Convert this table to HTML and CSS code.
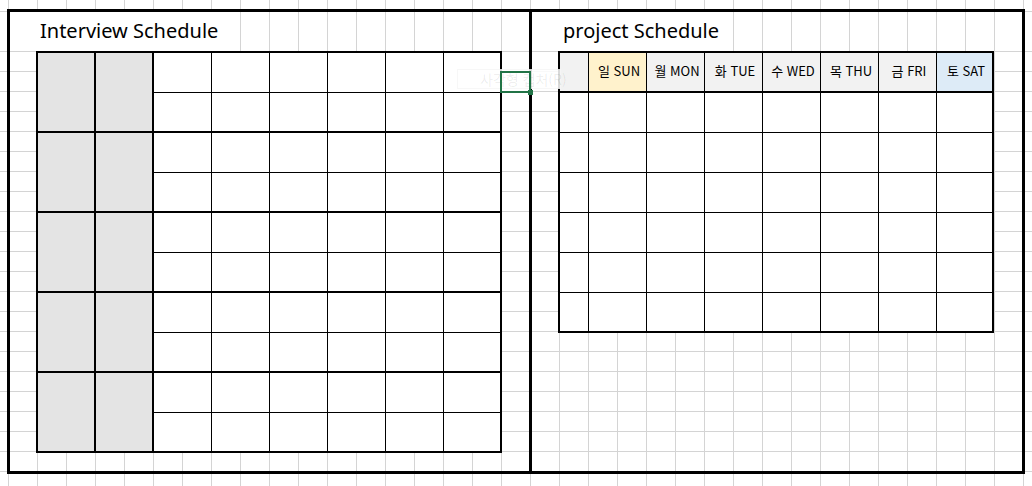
FILE: index.html
```html
<!DOCTYPE html>
<html lang="ko">
<head>
<meta charset="utf-8">
<title>Schedule</title>
<link rel="stylesheet" href="styles.css">
</head>
<body>
<div class="sheet">
  <section class="panel panel-left">
    <div class="title title-left">Interview Schedule</div>
    <div class="itable">
      <div class="ic g"></div><div class="ic g"></div>
      <div class="ic"></div><div class="ic"></div><div class="ic"></div><div class="ic"></div><div class="ic"></div><div class="ic r"></div>
      <div class="ic e"></div><div class="ic e"></div><div class="ic e"></div><div class="ic e"></div><div class="ic e"></div><div class="ic e r"></div>

      <div class="ic g"></div><div class="ic g"></div>
      <div class="ic"></div><div class="ic"></div><div class="ic"></div><div class="ic"></div><div class="ic"></div><div class="ic r"></div>
      <div class="ic e"></div><div class="ic e"></div><div class="ic e"></div><div class="ic e"></div><div class="ic e"></div><div class="ic e r"></div>

      <div class="ic g"></div><div class="ic g"></div>
      <div class="ic"></div><div class="ic"></div><div class="ic"></div><div class="ic"></div><div class="ic"></div><div class="ic r"></div>
      <div class="ic e"></div><div class="ic e"></div><div class="ic e"></div><div class="ic e"></div><div class="ic e"></div><div class="ic e r"></div>

      <div class="ic g"></div><div class="ic g"></div>
      <div class="ic"></div><div class="ic"></div><div class="ic"></div><div class="ic"></div><div class="ic"></div><div class="ic r"></div>
      <div class="ic e"></div><div class="ic e"></div><div class="ic e"></div><div class="ic e"></div><div class="ic e"></div><div class="ic e r"></div>

      <div class="ic g"></div><div class="ic g"></div>
      <div class="ic"></div><div class="ic"></div><div class="ic"></div><div class="ic"></div><div class="ic"></div><div class="ic r"></div>
      <div class="ic e"></div><div class="ic e"></div><div class="ic e"></div><div class="ic e"></div><div class="ic e"></div><div class="ic e r"></div>
    </div>
  </section>
  <section class="panel panel-right">
    <div class="title title-right">project Schedule</div>
    <div class="ptable">
      <div class="pc ph"></div>
      <div class="pc ph sun">일 SUN</div>
      <div class="pc ph">월 MON</div>
      <div class="pc ph">화 TUE</div>
      <div class="pc ph">수 WED</div>
      <div class="pc ph">목 THU</div>
      <div class="pc ph">금 FRI</div>
      <div class="pc ph sat r">토 SAT</div>

      <div class="pc"></div><div class="pc"></div><div class="pc"></div><div class="pc"></div><div class="pc"></div><div class="pc"></div><div class="pc"></div><div class="pc r"></div>
      <div class="pc"></div><div class="pc"></div><div class="pc"></div><div class="pc"></div><div class="pc"></div><div class="pc"></div><div class="pc"></div><div class="pc r"></div>
      <div class="pc"></div><div class="pc"></div><div class="pc"></div><div class="pc"></div><div class="pc"></div><div class="pc"></div><div class="pc"></div><div class="pc r"></div>
      <div class="pc"></div><div class="pc"></div><div class="pc"></div><div class="pc"></div><div class="pc"></div><div class="pc"></div><div class="pc"></div><div class="pc r"></div>
      <div class="pc"></div><div class="pc"></div><div class="pc"></div><div class="pc"></div><div class="pc"></div><div class="pc"></div><div class="pc"></div><div class="pc r"></div>
      <div class="pc l"></div><div class="pc l"></div><div class="pc l"></div><div class="pc l"></div><div class="pc l"></div><div class="pc l"></div><div class="pc l"></div><div class="pc l r"></div>
    </div>
  </section>
</div>

<div class="ghost"><span class="ghost-dot"></span><span class="ghost-text">사각형 캡처(R)</span></div>
<div class="selection"><span class="handle"></span></div>
</body>
</html>
```

FILE: styles.css
```css
html {
  margin: 0;
  min-height: 100%;
  background-color: #fff;
  background-image:
    linear-gradient(to right, #d4d4d4 1px, transparent 1px),
    linear-gradient(#fff, #fff),
    linear-gradient(to bottom, #d4d4d4 1px, transparent 1px);
  background-size: 29px 100%, 100% 39px, 100% 20px;
  background-position: 8px 0, 0 12px, 0 11px;
  background-repeat: repeat-x, no-repeat, repeat;
}

body {
  margin: 0;
  padding: 9px 0 0 7px;
  font-family: "Noto Sans", "Noto Sans CJK KR", sans-serif;
  color: #000;
}

.sheet {
  display: flex;
  width: 1018px;
  height: 465px;
  box-sizing: border-box;
  border: 3px solid #000;
}

.panel {
  display: flex;
  flex-direction: column;
  align-items: flex-start;
}

.panel-left {
  width: 522px;
  box-sizing: border-box;
  border-right: 3px solid #000;
}

.panel-right {
  width: 490px;
}

.title {
  height: 39px;
  line-height: 38px;
  font-size: 20px;
  background: #fff;
  white-space: nowrap;
  box-sizing: border-box;
}

.title-left {
  width: 229px;
  padding-left: 30px;
}

.title-right {
  width: 200px;
  padding-left: 31px;
}

/* Interview table */
.itable {
  margin-left: 26px;
  display: grid;
  grid-template-columns: repeat(8, 58px);
  grid-auto-rows: 40px;
  border-left: 2px solid #000;
  border-top: 2px solid #000;
}

.ic {
  box-sizing: border-box;
  background: #fff;
  border-right: 1px solid #000;
  border-bottom: 1px solid #000;
}

.ic.g {
  grid-row: span 2;
  background: #e4e4e4;
  border-right-width: 2px;
  border-bottom-width: 2px;
}

.ic.e {
  border-bottom-width: 2px;
}

.ic.r {
  border-right-width: 2px;
}

/* Project table */
.ptable {
  margin-left: 26px;
  display: grid;
  grid-template-columns: 29px repeat(6, 58px) 57px;
  grid-auto-rows: 40px;
  border-left: 2px solid #000;
  border-top: 2px solid #000;
}

.pc {
  box-sizing: border-box;
  background: #fff;
  border-right: 1px solid #000;
  border-bottom: 1px solid #000;
}

.pc.ph {
  background: #f2f2f2;
  border-bottom-width: 2px;
  display: flex;
  align-items: center;
  justify-content: center;
  padding-left: 3px;
  padding-bottom: 3px;
  font-family: "Noto Sans CJK KR", sans-serif;
  font-size: 13px;
  white-space: nowrap;
}

.pc.ph.sun {
  background: #fff2cc;
}

.pc.ph.sat {
  background: #ddebf7;
}

.pc.l {
  border-bottom-width: 2px;
}

.pc.r {
  border-right-width: 2px;
}

/* Overlays */
.ghost {
  position: absolute;
  left: 457px;
  top: 69px;
  width: 104px;
  height: 20px;
  box-sizing: border-box;
  display: flex;
  align-items: center;
  padding-left: 7px;
  background: rgba(255, 255, 255, 0.85);
  border: 1px solid rgba(0, 0, 0, 0.03);
  font-family: "Noto Sans CJK KR", sans-serif;
  font-size: 14px;
  color: rgba(0, 0, 0, 0.08);
}

.ghost-dot {
  width: 7px;
  height: 7px;
  border-radius: 50%;
  background: rgba(0, 0, 0, 0.07);
  margin-right: 15px;
}

.ghost-text {
  white-space: nowrap;
}

.selection {
  position: absolute;
  left: 500px;
  top: 71px;
  width: 31px;
  height: 22px;
  box-sizing: border-box;
  border: 2px solid #217346;
}

.handle {
  position: absolute;
  right: -4px;
  bottom: -4px;
  width: 5px;
  height: 5px;
  background: #217346;
}
```
